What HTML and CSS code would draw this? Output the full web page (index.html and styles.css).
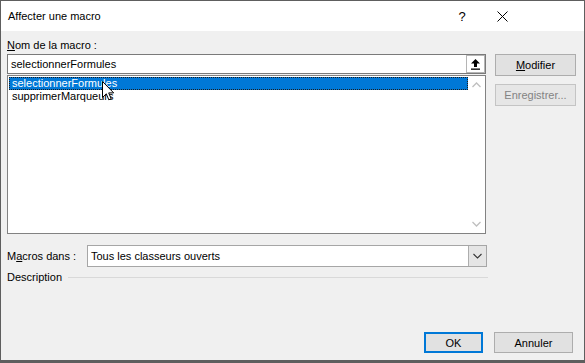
FILE: index.html
```html
<!DOCTYPE html>
<html>
 <head>
     <title>Affecter une macro</title>
     <link rel="stylesheet" href="styles.css">
     <meta charset="UTF-8">
 </head>
 <body>
  <div class="win">
    <div class="titlebar">
      <span class="title">Affecter une macro</span>
      <span class="help">?</span>
      <span class="close">
        <svg width="11" height="11" viewBox="0 0 11 11"><path d="M0.5 0.5 L10.5 10.5 M10.5 0.5 L0.5 10.5" stroke="#000" stroke-width="1"/></svg>
      </span>
    </div>
    <div class="content">
      <div class="main">
        <div class="left">
          <div class="label"><u>N</u>om de la macro :</div>
          <div class="namebox">
            <span class="nametext">selectionnerFormules</span>
            <span class="upbtn">
              <svg width="9" height="11" viewBox="0 0 9 11"><path d="M4.5 0 L9 4.5 L6 4.5 L6 8 L3 8 L3 4.5 L0 4.5 Z" fill="#000"/><rect x="0" y="9.5" width="9" height="1.3" fill="#000"/></svg>
            </span>
          </div>
          <div class="list">
            <div class="items">
              <div class="item sel">selectionnerFormules</div>
              <div class="item">supprimerMarqueurs</div>
            </div>
            <div class="scroll">
              <svg width="9" height="6" viewBox="0 0 9 6"><path d="M0.5 5 L4.5 1 L8.5 5" fill="none" stroke="#bfbfbf" stroke-width="1.3"/></svg>
              <svg width="9" height="6" viewBox="0 0 9 6"><path d="M0.5 1 L4.5 5 L8.5 1" fill="none" stroke="#bfbfbf" stroke-width="1.3"/></svg>
            </div>
          </div>
        </div>
        <div class="side">
          <div class="btn"><u>M</u>odifier</div>
          <div class="btn disabled">Enregistrer...</div>
        </div>
      </div>
      <div class="macrosrow">
        <span class="mlabel">M<u>a</u>cros dans :</span>
        <div class="combo">
          <span class="combotext">Tous les classeurs ouverts</span>
          <span class="dropbtn">
            <svg width="9" height="6" viewBox="0 0 9 6"><path d="M0.5 1 L4.5 5 L8.5 1" fill="none" stroke="#333" stroke-width="1.1"/></svg>
          </span>
        </div>
      </div>
      <div class="descrow">
        <span>Description</span>
        <span class="descline"></span>
      </div>
      <div class="footer">
        <div class="btn ok">OK</div>
        <div class="btn cancel">Annuler</div>
      </div>
    </div>
    <svg class="cursor" width="13" height="21" viewBox="0 0 13 21"><path d="M0.5 0.5 L0.5 16.5 L4.3 12.8 L6.8 18.8 L9.2 17.8 L6.7 11.9 L11.7 11.9 Z" fill="#fff" stroke="#000" stroke-width="1"/></svg>
  </div>
 </body>
</html>
```

FILE: styles.css
```css
body {
    margin: 0;
    font-family: "Liberation Sans", Arial, sans-serif;
    font-size: 11px;
    color: #000;
}
.win {
    position: relative;
    width: 585px; height: 363px;
    box-sizing: border-box;
    border: 1px solid #5e5e5e; border-bottom-width: 3px;
    background: #f0f0f0;
    display: flex; flex-direction: column;
}
.titlebar {
    height: 30px; flex: none;
    background: #fff;
    display: flex; align-items: center;
    padding-left: 7px;
}
.title {flex: 1;}
.help {width: 20px; text-align: center; font-size: 13px;}
.close {width: 20px; margin-left: 20px; margin-right: 72px; display: flex; justify-content: center;}

.content {
    flex: 1;
    display: flex; flex-direction: column;
    padding: 6px 0 7px 6px;
}
.main {display: flex; gap: 9px;}
.left {width: 479px;}
.label {line-height: 16px; height: 16px;}
.namebox {
    margin-top: 1px; height: 20px;
    box-sizing: border-box;
    border: 1px solid #7a7a7a; background: #fff;
    display: flex; align-items: center;
}
.nametext {flex: 1; padding-left: 3px;}
.upbtn {
    width: 19px; height: 18px; box-sizing: border-box;
    border: 1px solid #b5b5b5; background: #fff;
    display: flex; align-items: center; justify-content: center;
}
.list {
    margin-top: 1px; height: 159px;
    box-sizing: border-box;
    border: 1px solid #828282; background: #fff;
    display: flex;
}
.items {flex: 1; padding-top: 1px;}
.item {line-height: 13px; height: 13px; padding-left: 3px; margin-left: 1px; white-space: nowrap;}
.item.sel {
    background: #0078d7; color: #fff;
    box-sizing: border-box; border: 1px dotted #1d1d1d;
    padding-left: 2px; line-height: 11px;
}
.scroll {
    width: 17px;
    display: flex; flex-direction: column; align-items: center; justify-content: space-between;
    padding: 6px 0 6px;
}
.side {padding-top: 17px; display: flex; flex-direction: column; gap: 8px;}
.btn {
    width: 81px; height: 22px; box-sizing: border-box;
    border: 1px solid #adadad; background: #e1e1e1;
    display: flex; align-items: center; justify-content: center;
}
.btn.disabled {color: #838383; border-color: #c4c4c4; background: #e6e6e6;}

.macrosrow {margin-top: 11px; display: flex; align-items: center; width: 480px;}
.mlabel {width: 80px;}
.combo {
    flex: 1; height: 22px; box-sizing: border-box;
    border: 1px solid #a6a6a6; background: #fff;
    display: flex; align-items: center;
}
.combotext {flex: 1; padding-left: 3px;}
.dropbtn {
    width: 18px; height: 20px; box-sizing: border-box;
    border-left: 1px solid #adadad; background: #e5e5e5;
    display: flex; align-items: center; justify-content: center;
}
.descrow {margin-top: 2px; line-height: 16px; display: flex; align-items: center; width: 481px;}
.descline {flex: 1; margin-left: 6px; border-top: 1px solid #d9d9d9;}

.footer {margin-top: auto; display: flex; justify-content: flex-end; gap: 11px; padding-right: 11px;}
.footer .btn {height: 21px;}
.btn.ok {width: 59px; border: 2px solid #0078d7;}
.btn.cancel {width: 79px;}

.cursor {position: absolute; left: 101px; top: 80px;}
```
